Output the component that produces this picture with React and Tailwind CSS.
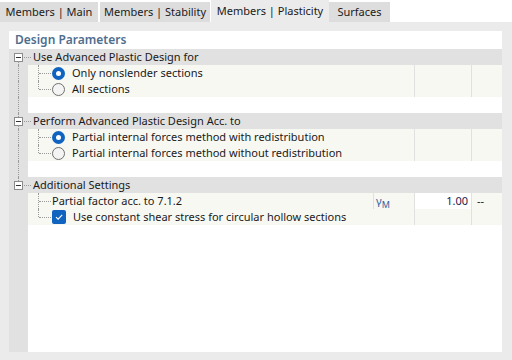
import React from 'react';

const FONT = { fontFamily: '"Segoe UI", "Noto Sans", sans-serif' };

// ---- small pieces ----
const Radio = ({ checked }) =>
  checked ? (
    <span className="flex h-[13px] w-[13px] items-center justify-center rounded-full bg-[#1064c0]">
      <span className="h-[5px] w-[5px] rounded-full bg-white" />
    </span>
  ) : (
    <span className="h-[13px] w-[13px] rounded-full border border-[#6f6f6f] bg-[#f4f4f4]" />
  );

const Check = () => (
  <span className="flex h-[14px] w-[14px] items-center justify-center rounded-[2px] bg-[#1064c0]">
    <svg width="10" height="10" viewBox="0 0 10 10">
      <path d="M2 5.2 L4.1 7.2 L8.2 2.8" fill="none" stroke="white" strokeWidth="1.1" />
    </svg>
  </span>
);

// gutter cell with optional dotted trunk line
const Gutter = ({ trunk }) => (
  <div className="relative w-[19px] shrink-0 self-stretch bg-[#e1e1e1]">
    {trunk && <div className="absolute bottom-0 left-[9px] top-0 border-l border-dotted border-[#9a9a9a]" />}
  </div>
);

const GroupHeader = ({ title, up, down }) => (
  <div className="relative flex h-4 items-center bg-[#e1e1e1]">
    {up && <div className="absolute left-[9px] top-0 h-[4px] border-l border-dotted border-[#9a9a9a]" />}
    {down && <div className="absolute bottom-0 left-[9px] h-[4px] border-l border-dotted border-[#9a9a9a]" />}
    <span className="ml-[5px] flex h-[9px] w-[9px] items-center justify-center border border-[#8c8c8c] bg-white">
      <span className="h-px w-[5px] bg-[#333]" />
    </span>
    <span className="ml-px w-[7px] border-t border-dotted border-[#9a9a9a]" />
    <span className="ml-[2px] whitespace-nowrap text-[11px] leading-4 text-[#1a1a1a]">{title}</span>
  </div>
);

// one item row: tree lines + content + value columns
const Item = ({ trunk, last, children, sym, value, unit, cellLine }) => (
  <div className="flex h-4">
    <Gutter trunk={trunk} />
    <div className="relative flex flex-1 bg-[#f8f8f3]">
      <div
        className={`absolute left-[10px] top-0 border-l border-dotted border-[#9a9a9a] ${last ? 'h-[8px]' : 'h-4'}`}
      />
      <div className="absolute left-[11px] top-[8px] w-[12px] border-t border-dotted border-[#9a9a9a]" />
      <div className="flex flex-1 items-center pl-[24px]">{children}</div>
      <div className={`flex w-[41px] items-center pl-[2px] ${cellLine ? 'border-l border-[#e1e1e1]' : ''}`}>
        {sym && (
          <span className="text-[11px] leading-4 text-[#2f5fa0]">
            γ<sub className="text-[9px] align-[-1px]">M</sub>
          </span>
        )}
      </div>
      <div
        className={`flex w-[57px] items-center justify-end border-l border-[#e1e1e1] pr-[3px] ${value ? 'bg-white' : ''}`}
      >
        {value && <span className="text-[11px] leading-4 text-[#1a1a4a]">{value}</span>}
      </div>
      <div className="flex w-[31px] items-center border-l border-[#e1e1e1] pl-[5px]">
        {unit && <span className="text-[11px] leading-4 text-[#1a1a1a]">{unit}</span>}
      </div>
    </div>
  </div>
);

const Spacer = ({ trunk }) => (
  <div className="flex h-4">
    <Gutter trunk={trunk} />
    <div className="flex-1 bg-white" />
  </div>
);

const Label = ({ children, gap }) => (
  <span className={`whitespace-nowrap text-[11px] leading-4 text-[#1a1a1a] ${gap ? 'ml-[7px]' : ''}`}>
    {children}
  </span>
);

const tabs = [
  { name: 'Members | Main', w: 'w-[98px]', ml: '' },
  { name: 'Members | Stability', w: 'w-[110px]', ml: 'ml-[2px]' },
  { name: 'Members | Plasticity', w: 'w-[118px]', ml: 'ml-px', active: true },
  { name: 'Surfaces', w: 'w-[61px]', ml: '' },
];

export default function App() {
  return (
    <div className="flex h-[360px] w-[512px] flex-col bg-[#ebebeb]" style={FONT}>
      {/* tab strip */}
      <div className="flex h-[22px] items-end bg-white">
        {tabs.map((t) => (
          <div
            key={t.name}
            className={`flex shrink-0 items-center justify-center whitespace-nowrap text-[11px] text-[#1a1a1a] ${t.w} ${t.ml} ${
              t.active ? 'h-[22px] bg-[#ebebeb]' : 'h-[20px] bg-[#dddddd]'
            }`}
          >
            {t.name}
          </div>
        ))}
      </div>

      {/* panel */}
      <div className="flex flex-1 flex-col pb-[8px] pl-[9px] pr-[10px] pt-[9px]">
        <div className="flex flex-1 flex-col bg-white">
          <div className="flex h-[18px] items-center pl-[6px] text-[12px] font-semibold text-[#4f6e8e]">
            Design Parameters
          </div>

          <GroupHeader title="Use Advanced Plastic Design for" down />
          <Item trunk>
            <Radio checked />
            <Label gap>Only nonslender sections</Label>
          </Item>
          <Item trunk last>
            <Radio />
            <Label gap>All sections</Label>
          </Item>
          <Spacer trunk />

          <GroupHeader title="Perform Advanced Plastic Design Acc. to" up down />
          <Item trunk>
            <Radio checked />
            <Label gap>Partial internal forces method with redistribution</Label>
          </Item>
          <Item trunk last>
            <Radio />
            <Label gap>Partial internal forces method without redistribution</Label>
          </Item>
          <Spacer trunk />

          <GroupHeader title="Additional Settings" up />
          <Item sym value="1.00" unit="--" cellLine>
            <Label>Partial factor acc. to 7.1.2</Label>
          </Item>
          <Item last>
            <Check />
            <Label gap>Use constant shear stress for circular hollow sections</Label>
          </Item>

          <div className="flex flex-1">
            <Gutter />
            <div className="flex-1 bg-white" />
          </div>
        </div>
      </div>
    </div>
  );
}
